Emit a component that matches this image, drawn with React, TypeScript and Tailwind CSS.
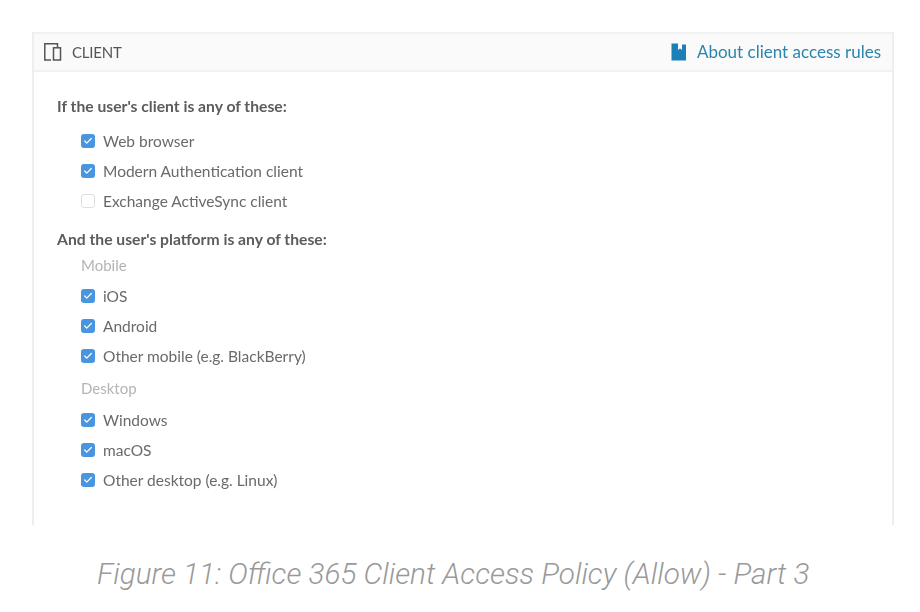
import { Check } from "lucide-react";

function Option({ label, checked = true }: { label: string; checked?: boolean }) {
  return (
    <div className="flex h-[30px] items-center gap-[8px] pl-[24px]">
      {checked ? (
        <span className="flex h-[14px] w-[14px] items-center justify-center rounded-[3px] bg-[#4a95e0]">
          <Check size={10} strokeWidth={3} className="text-white" />
        </span>
      ) : (
        <span className="h-[14px] w-[14px] rounded-[3px] border border-[#dedede] bg-white" />
      )}
      <span className="-mt-[1px] text-[15.5px] leading-[20px] text-[#6a6a6a]">{label}</span>
    </div>
  );
}

function Group({ label }: { label: string }) {
  return <div className="pl-[24px] text-[15px] leading-[20px] text-[#b4b4b4]">{label}</div>;
}

export default function App() {
  return (
    <div className="h-[612px] w-[920px] overflow-hidden bg-white pl-[32px] pr-[26px] pt-[32px] font-['Lato',sans-serif]">
      {/* Panel */}
      <div className="h-[493px] border-x-2 border-[#eeeeee]">
        <div className="flex h-[40px] items-center justify-between border-y-2 border-[#f1f1f1] bg-[#fafafa] pl-[10px] pr-[11px] blur-[0.7px]">
          <div className="flex items-center gap-[8px]">
            <svg width="20" height="18" viewBox="0 0 20 18" fill="none" stroke="#555555" strokeWidth="1.5">
              <path d="M7 17H0.8V0.8H13.5V4.5" />
              <rect x="9.5" y="4.8" width="7" height="12.2" />
            </svg>
            <span className="text-[15px] tracking-[-0.2px] text-[#555555]">CLIENT</span>
          </div>
          <div className="flex items-center gap-[10px]">
            <svg width="16" height="18" viewBox="0 0 16 18" fill="#1d7fb8">
              <path d="M0.5 0.5H7V7L9 5.5L11 7V1.5H15V17.5H0.5Z" />
            </svg>
            <span className="text-[17px] text-[#2a85ad]">About client access rules</span>
          </div>
        </div>

        <div className="px-[23px] pt-[24px] blur-[0.7px]">
          <div className="text-[15.7px] font-bold leading-[20px] text-[#5c5c5c]">If the user's client is any of these:</div>
          <div className="mt-[10px]">
            <Option label="Web browser" />
            <Option label="Modern Authentication client" />
            <Option label="Exchange ActiveSync client" checked={false} />
          </div>
          <div className="mt-[13px] text-[15.7px] font-bold leading-[20px] text-[#5c5c5c]">And the user's platform is any of these:</div>
          <div className="mt-[6px]">
            <Group label="Mobile" />
            <div className="mt-[6px]">
              <Option label="iOS" />
              <Option label="Android" />
              <Option label="Other mobile (e.g. BlackBerry)" />
            </div>
            <div className="mt-[7px]">
              <Group label="Desktop" />
            </div>
            <div className="mt-[7px]">
              <Option label="Windows" />
              <Option label="macOS" />
              <Option label="Other desktop (e.g. Linux)" />
            </div>
          </div>
        </div>
      </div>

      {/* Caption */}
      <div className="mt-[29px] pl-[65px] font-['Roboto',sans-serif] text-[29.7px] font-light italic leading-[40px] text-[#999999]">
        Figure 11: Office 365 Client Access Policy (Allow) - Part 3
      </div>
    </div>
  );
}
